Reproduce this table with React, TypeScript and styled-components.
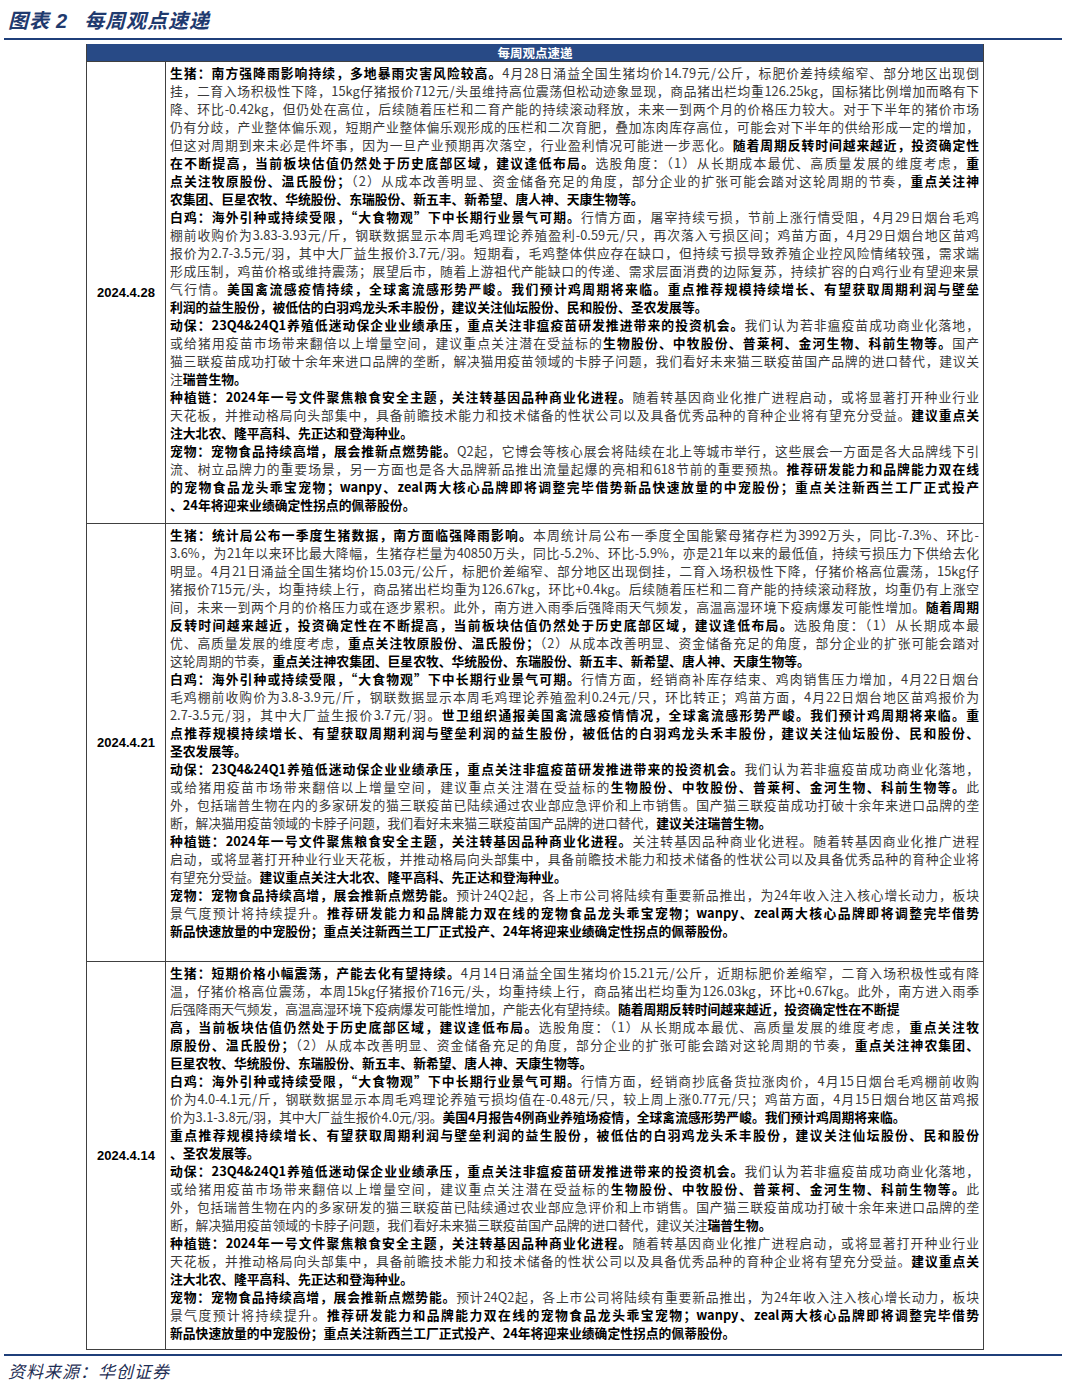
import { createGlobalStyle } from 'styled-components';
import styled from 'styled-components';

const GlobalStyle = createGlobalStyle`
  body {
    margin: 0;
    background: #ffffff;
    font-family: "Noto Sans CJK SC", "Noto Sans", sans-serif;
  }
`;

const Page = styled.div`
  width: 1066px;
  padding: 0 4px;
  box-sizing: border-box;
`;

const Title = styled.div`
  display: flex;
  align-items: center;
  gap: 16px;
  height: 40px;
  padding: 0 0 0 4px;
  border-bottom: 2px solid #1f3f7a;
  color: #1f3a6e;
  font-size: 20px;
  font-weight: 700;
  font-style: italic;
  letter-spacing: 1px;
  box-sizing: border-box;
  margin-bottom: 4px;
`;

const TitleNum = styled.span`
  font-family: "Liberation Sans", sans-serif;
  margin-left: 6px;
`;

const Table = styled.div`
  margin-left: 82px;
  width: 898px;
  border: 1px solid #404040;
  border-top: none;
  box-sizing: border-box;
`;

const Header = styled.div`
  height: 17px;
  background: #284a86;
  color: #ffffff;
  font-size: 12.5px;
  font-weight: 700;
  text-align: center;
  line-height: 17px;
`;

const Row = styled.div`
  display: grid;
  grid-template-columns: 79px 1fr;
  border-top: 1px solid #404040;
  &:first-of-type {
    border-top: none;
  }
`;

const DateCell = styled.div`
  display: flex;
  align-items: center;
  justify-content: center;
  border-right: 1px solid #404040;
  font-family: "Liberation Sans", sans-serif;
  font-weight: 700;
  font-size: 13px;
  color: #000;
`;

const TextCell = styled.div<{ $bottom: number }>`
  padding: 2px 4px ${p => p.$bottom}px 4px;
  font-size: 12.8px;
  line-height: 18px;
  color: #3a3a3a;
`;

const Line = styled.div<{ $justify: boolean }>`
  height: 18px;
  text-align: ${p => (p.$justify ? 'justify' : 'left')};
  text-align-last: ${p => (p.$justify ? 'justify' : 'left')};
  text-justify: inter-character;
`;

const Strong = styled.b`
  font-weight: 700;
  color: #000;
`;

const Source = styled.div`
  margin-top: 4px;
  border-top: 2px solid #1f3f7a;
  padding: 3px 0 0 4px;
  font-size: 17px;
  line-height: 24px;
  font-style: italic;
  color: #1f2f55;
  letter-spacing: 1px;
`;

type RowData = { date: string; bottom: number; paras: string[][] };

const rows: RowData[] = [
  {
    date: '2024.4.28',
    bottom: 9,
    paras: [
      [
        '**生猪：南方强降雨影响持续，多地暴雨灾害风险较高。**4月28日涌益全国生猪均价14.79元/公斤，标肥价差持续缩窄、部分地区出现倒',
        '挂，二育入场积极性下降，15kg仔猪报价712元/头虽维持高位震荡但松动迹象显现，商品猪出栏均重126.25kg，国标猪比例增加而略有下',
        '降、环比-0.42kg，但仍处在高位，后续随着压栏和二育产能的持续滚动释放，未来一到两个月的价格压力较大。对于下半年的猪价市场',
        '仍有分歧，产业整体偏乐观，短期产业整体偏乐观形成的压栏和二次育肥，叠加冻肉库存高位，可能会对下半年的供给形成一定的增加，',
        '但这对周期到来未必是件坏事，因为一旦产业预期再次落空，行业盈利情况可能进一步恶化。**随着周期反转时间越来越近，投资确定性**',
        '**在不断提高，当前板块估值仍然处于历史底部区域，建议逢低布局。**选股角度：（1）从长期成本最优、高质量发展的维度考虑，**重**',
        '**点关注牧原股份、温氏股份；**（2）从成本改善明显、资金储备充足的角度，部分企业的扩张可能会踏对这轮周期的节奏，**重点关注神**',
        '**农集团、巨星农牧、华统股份、东瑞股份、新五丰、新希望、唐人神、天康生物等。**',
      ],
      [
        '**白鸡：海外引种或持续受限，“大食物观”下中长期行业景气可期。**行情方面，屠宰持续亏损，节前上涨行情受阻，4月29日烟台毛鸡',
        '棚前收购价为3.83-3.93元/斤，钢联数据显示本周毛鸡理论养殖盈利-0.59元/只，再次落入亏损区间；鸡苗方面，4月29日烟台地区苗鸡',
        '报价为2.7-3.5元/羽，其中大厂益生报价3.7元/羽。短期看，毛鸡整体供应存在缺口，但持续亏损导致养殖企业控风险情绪较强，需求端',
        '形成压制，鸡苗价格或维持震荡；展望后市，随着上游祖代产能缺口的传递、需求层面消费的边际复苏，持续扩容的白鸡行业有望迎来景',
        '气行情。**美国禽流感疫情持续，全球禽流感形势严峻。我们预计鸡周期将来临。重点推荐规模持续增长、有望获取周期利润与壁垒**',
        '**利润的益生股份，被低估的白羽鸡龙头禾丰股份，建议关注仙坛股份、民和股份、圣农发展等。**',
      ],
      [
        '**动保：23Q4&24Q1养殖低迷动保企业业绩承压，重点关注非瘟疫苗研发推进带来的投资机会。**我们认为若非瘟疫苗成功商业化落地，',
        '或给猪用疫苗市场带来翻倍以上增量空间，建议重点关注潜在受益标的**生物股份、中牧股份、普莱柯、金河生物、科前生物等。**国产',
        '猫三联疫苗成功打破十余年来进口品牌的垄断，解决猫用疫苗领域的卡脖子问题，我们看好未来猫三联疫苗国产品牌的进口替代，建议关',
        '注**瑞普生物。**',
      ],
      [
        '**种植链：2024年一号文件聚焦粮食安全主题，关注转基因品种商业化进程。**随着转基因商业化推广进程启动，或将显著打开种业行业',
        '天花板，并推动格局向头部集中，具备前瞻技术能力和技术储备的性状公司以及具备优秀品种的育种企业将有望充分受益。**建议重点关**',
        '**注大北农、隆平高科、先正达和登海种业。**',
      ],
      [
        '**宠物：宠物食品持续高增，展会推新点燃势能。**Q2起，它博会等核心展会将陆续在北上等城市举行，这些展会一方面是各大品牌线下引',
        '流、树立品牌力的重要场景，另一方面也是各大品牌新品推出流量起爆的亮相和618节前的重要预热。**推荐研发能力和品牌能力双在线**',
        '**的宠物食品龙头乖宝宠物；wanpy、zeal两大核心品牌即将调整完毕借势新品快速放量的中宠股份；重点关注新西兰工厂正式投产**',
        '**、24年将迎来业绩确定性拐点的佩蒂股份。**',
      ],
    ],
  },
  {
    date: '2024.4.21',
    bottom: 21,
    paras: [
      [
        '**生猪：统计局公布一季度生猪数据，南方面临强降雨影响。**本周统计局公布一季度全国能繁母猪存栏为3992万头，同比-7.3%、环比-',
        '3.6%，为21年以来环比最大降幅，生猪存栏量为40850万头，同比-5.2%、环比-5.9%，亦是21年以来的最低值，持续亏损压力下供给去化',
        '明显。4月21日涌益全国生猪均价15.03元/公斤，标肥价差缩窄、部分地区出现倒挂，二育入场积极性下降，仔猪价格高位震荡，15kg仔',
        '猪报价715元/头，均重持续上行，商品猪出栏均重为126.67kg，环比+0.4kg。后续随着压栏和二育产能的持续滚动释放，均重仍有上涨空',
        '间，未来一到两个月的价格压力或在逐步累积。此外，南方进入雨季后强降雨天气频发，高温高湿环境下疫病爆发可能性增加。**随着周期**',
        '**反转时间越来越近，投资确定性在不断提高，当前板块估值仍然处于历史底部区域，建议逢低布局。**选股角度：（1）从长期成本最',
        '优、高质量发展的维度考虑，**重点关注牧原股份、温氏股份；**（2）从成本改善明显、资金储备充足的角度，部分企业的扩张可能会踏对',
        '这轮周期的节奏，**重点关注神农集团、巨星农牧、华统股份、东瑞股份、新五丰、新希望、唐人神、天康生物等。**',
      ],
      [
        '**白鸡：海外引种或持续受限，“大食物观”下中长期行业景气可期。**行情方面，经销商补库存结束、鸡肉销售压力增加，4月22日烟台',
        '毛鸡棚前收购价为3.8-3.9元/斤，钢联数据显示本周毛鸡理论养殖盈利0.24元/只，环比转正；鸡苗方面，4月22日烟台地区苗鸡报价为',
        '2.7-3.5元/羽，其中大厂益生报价3.7元/羽。**世卫组织通报美国禽流感疫情情况，全球禽流感形势严峻。我们预计鸡周期将来临。重**',
        '**点推荐规模持续增长、有望获取周期利润与壁垒利润的益生股份，被低估的白羽鸡龙头禾丰股份，建议关注仙坛股份、民和股份、**',
        '**圣农发展等。**',
      ],
      [
        '**动保：23Q4&24Q1养殖低迷动保企业业绩承压，重点关注非瘟疫苗研发推进带来的投资机会。**我们认为若非瘟疫苗成功商业化落地，',
        '或给猪用疫苗市场带来翻倍以上增量空间，建议重点关注潜在受益标的**生物股份、中牧股份、普莱柯、金河生物、科前生物等。**此',
        '外，包括瑞普生物在内的多家研发的猫三联疫苗已陆续通过农业部应急评价和上市销售。国产猫三联疫苗成功打破十余年来进口品牌的垄',
        '断，解决猫用疫苗领域的卡脖子问题，我们看好未来猫三联疫苗国产品牌的进口替代，**建议关注瑞普生物。**',
      ],
      [
        '**种植链：2024年一号文件聚焦粮食安全主题，关注转基因品种商业化进程。**关注转基因品种商业化进程。随着转基因商业化推广进程',
        '启动，或将显著打开种业行业天花板，并推动格局向头部集中，具备前瞻技术能力和技术储备的性状公司以及具备优秀品种的育种企业将',
        '有望充分受益。**建议重点关注大北农、隆平高科、先正达和登海种业。**',
      ],
      [
        '**宠物：宠物食品持续高增，展会推新点燃势能。**预计24Q2起，各上市公司将陆续有重要新品推出，为24年收入注入核心增长动力，板块',
        '景气度预计将持续提升。**推荐研发能力和品牌能力双在线的宠物食品龙头乖宝宠物；wanpy、zeal两大核心品牌即将调整完毕借势**',
        '**新品快速放量的中宠股份；重点关注新西兰工厂正式投产、24年将迎来业绩确定性拐点的佩蒂股份。**',
      ],
    ],
  },
  {
    date: '2024.4.14',
    bottom: 7,
    paras: [
      [
        '**生猪：短期价格小幅震荡，产能去化有望持续。**4月14日涌益全国生猪均价15.21元/公斤，近期标肥价差缩窄，二育入场积极性或有降',
        '温，仔猪价格高位震荡，本周15kg仔猪报价716元/头，均重持续上行，商品猪出栏均重为126.03kg，环比+0.67kg。此外，南方进入雨季',
        '~后强降雨天气频发，高温高湿环境下疫病爆发可能性增加，产能去化有望持续。**随着周期反转时间越来越近，投资确定性在不断提**',
        '**高，当前板块估值仍然处于历史底部区域，建议逢低布局。**选股角度：（1）从长期成本最优、高质量发展的维度考虑，**重点关注牧**',
        '**原股份、温氏股份；**（2）从成本改善明显、资金储备充足的角度，部分企业的扩张可能会踏对这轮周期的节奏，**重点关注神农集团、**',
        '**巨星农牧、华统股份、东瑞股份、新五丰、新希望、唐人神、天康生物等。**',
      ],
      [
        '**白鸡：海外引种或持续受限，“大食物观”下中长期行业景气可期。**行情方面，经销商抄底备货拉涨肉价，4月15日烟台毛鸡棚前收购',
        '价为4.0-4.1元/斤，钢联数据显示本周毛鸡理论养殖亏损均值在-0.48元/只，较上周上涨0.77元/只；鸡苗方面，4月15日烟台地区苗鸡报',
        '~价为3.1-3.8元/羽，其中大厂益生报价4.0元/羽。**美国4月报告4例商业养殖场疫情，全球禽流感形势严峻。我们预计鸡周期将来临。**',
        '**重点推荐规模持续增长、有望获取周期利润与壁垒利润的益生股份，被低估的白羽鸡龙头禾丰股份，建议关注仙坛股份、民和股份**',
        '**、圣农发展等。**',
      ],
      [
        '**动保：23Q4&24Q1养殖低迷动保企业业绩承压，重点关注非瘟疫苗研发推进带来的投资机会。**我们认为若非瘟疫苗成功商业化落地，',
        '或给猪用疫苗市场带来翻倍以上增量空间，建议重点关注潜在受益标的**生物股份、中牧股份、普莱柯、金河生物、科前生物等。**此',
        '外，包括瑞普生物在内的多家研发的猫三联疫苗已陆续通过农业部应急评价和上市销售。国产猫三联疫苗成功打破十余年来进口品牌的垄',
        '断，解决猫用疫苗领域的卡脖子问题，我们看好未来猫三联疫苗国产品牌的进口替代，建议关注**瑞普生物。**',
      ],
      [
        '**种植链：2024年一号文件聚焦粮食安全主题，关注转基因品种商业化进程。**随着转基因商业化推广进程启动，或将显著打开种业行业',
        '天花板，并推动格局向头部集中，具备前瞻技术能力和技术储备的性状公司以及具备优秀品种的育种企业将有望充分受益。**建议重点关**',
        '**注大北农、隆平高科、先正达和登海种业。**',
      ],
      [
        '**宠物：宠物食品持续高增，展会推新点燃势能。**预计24Q2起，各上市公司将陆续有重要新品推出，为24年收入注入核心增长动力，板块',
        '景气度预计将持续提升。**推荐研发能力和品牌能力双在线的宠物食品龙头乖宝宠物；wanpy、zeal两大核心品牌即将调整完毕借势**',
        '**新品快速放量的中宠股份；重点关注新西兰工厂正式投产、24年将迎来业绩确定性拐点的佩蒂股份。**',
      ],
    ],
  },
];

// "**" toggles bold; a leading "~" keeps a wrapped line ragged
const renderLine = (raw: string, isLast: boolean, key: string) => {
  const ragged = raw.startsWith('~');
  const text = ragged ? raw.slice(1) : raw;
  const parts = text.split('**');
  return (
    <Line key={key} $justify={!isLast && !ragged}>
      {parts.map((part, i) =>
        i % 2 === 1 ? <Strong key={i}>{part}</Strong> : <span key={i}>{part}</span>
      )}
    </Line>
  );
};

function App() {
  return (
    <>
      <GlobalStyle />
      <Page lang="zh-CN">
        <Title>
          <span>
            图表<TitleNum>2</TitleNum>
          </span>
          <span>每周观点速递</span>
        </Title>
        <Table>
          <Header>每周观点速递</Header>
          {rows.map(row => (
            <Row key={row.date}>
              <DateCell>{row.date}</DateCell>
              <TextCell $bottom={row.bottom}>
                {row.paras.map((para, pi) =>
                  para.map((line, li) =>
                    renderLine(line, li === para.length - 1, `${pi}-${li}`)
                  )
                )}
              </TextCell>
            </Row>
          ))}
        </Table>
        <Source>资料来源：华创证券</Source>
      </Page>
    </>
  );
}

export default App;
